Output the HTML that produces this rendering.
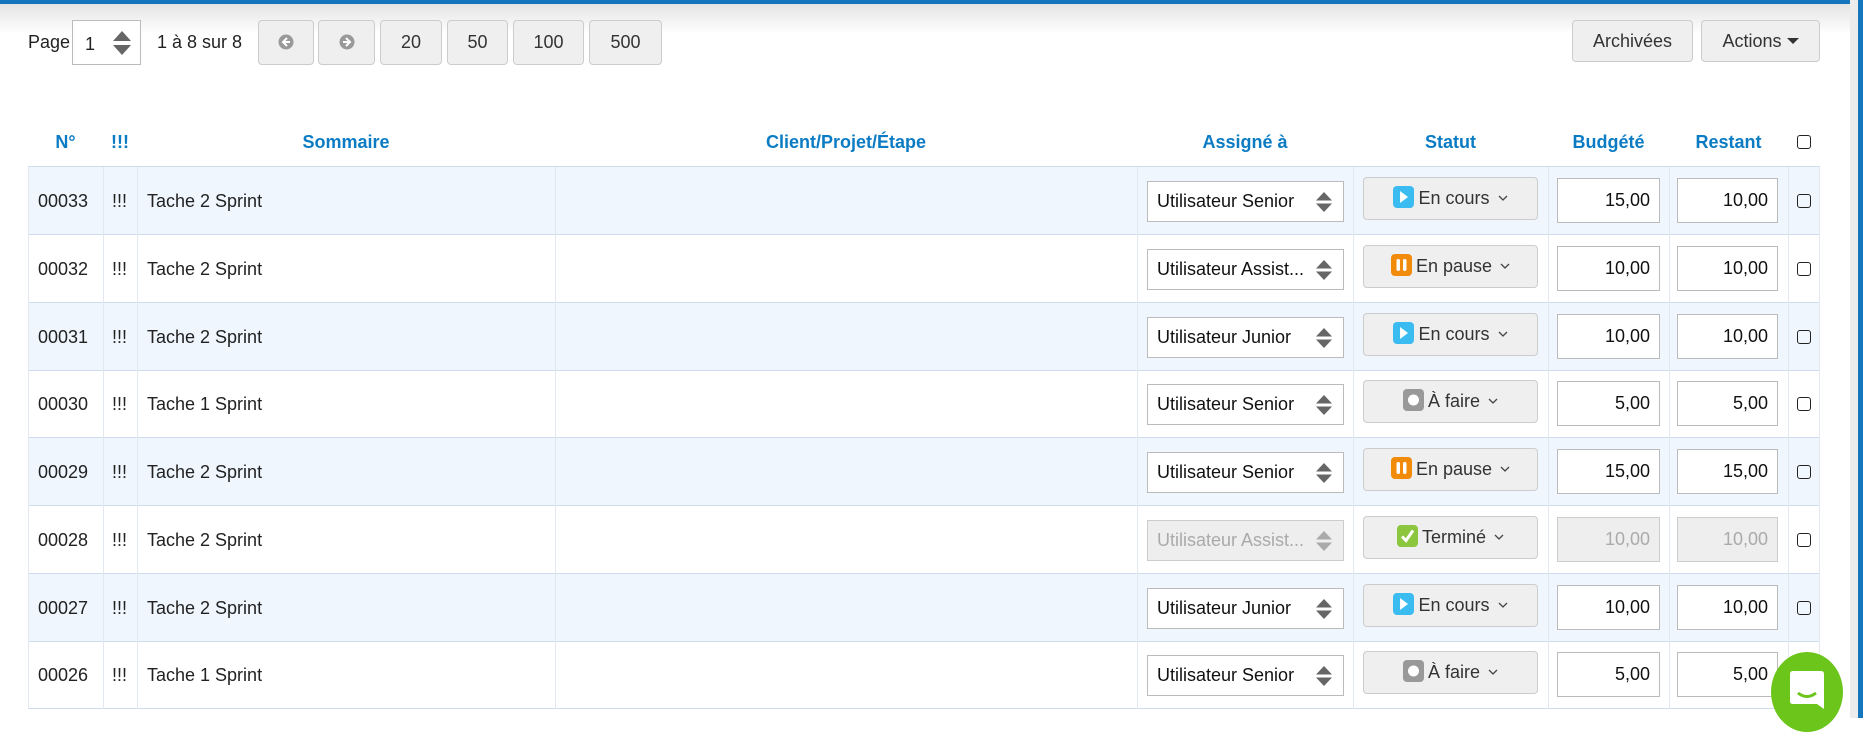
<!DOCTYPE html>
<html><head><meta charset="utf-8"><style>
*{box-sizing:border-box;margin:0;padding:0}
body{width:1863px;height:718px;overflow:hidden;background:#fff;font-family:"Liberation Sans",sans-serif;font-size:18px;color:#222;position:relative}
.topbar{position:absolute;left:0;top:0;width:1863px;height:4px;background:#1477bd}
.shadow{position:absolute;left:0;top:4px;width:1850px;height:30px;background:linear-gradient(#e4e4e4,#fff)}
.rstrip{position:absolute;left:1850px;top:0;width:8px;height:718px;background:#ececec}
.rblue{position:absolute;left:1858px;top:0;width:5px;height:718px;background:#1477bd}
.a{position:absolute}
.btn{position:absolute;top:20px;height:45px;border:1px solid #ccc;border-radius:4px;background:#efefef;text-align:center;line-height:43px;font-size:18px;color:#333}
.hd{position:absolute;top:132px;color:#0b7cc3;font-weight:bold;font-size:18px;text-align:center}
.row{position:absolute;left:28px;width:1792px;height:68px;border-bottom:1px solid #cfdcee}
.row.o{background:#eff6fe}
.vl{position:absolute;top:167px;width:1px;height:542px;background:#e2e8f0}
.c{position:absolute;line-height:68px;font-size:18px}
.sel{position:absolute;left:1119px;top:14px;width:197px;height:41px;border:1px solid #bbb;background:#fff;line-height:39px;padding-left:9px;font-size:18px;color:#111}
.sel.d{background:#eee;color:#aaa;border-color:#ccc}
.arr{position:absolute;right:10px;top:9px;width:18px;height:22px}
.st{position:absolute;left:1335px;top:10px;width:175px;height:43px;border:1px solid #ccc;border-radius:4px;background:#efefef;text-align:center;line-height:41px;font-size:18px;color:#333}
.ic{display:inline-block;width:21px;height:22px;border-radius:4px;vertical-align:-4px;margin-right:4px;position:relative}
.num{position:absolute;top:11px;width:103px;height:45px;border:1px solid #bbb;background:#fff;text-align:right;padding-right:9px;line-height:43px;font-size:18px;color:#111}
.num.d{background:#eee;color:#aaa;border-color:#ccc}
.cb{position:absolute;left:1769px;top:27px;width:14px;height:14px;border:1.5px solid #222;border-radius:3px}
</style></head><body>
<div class="topbar"></div><div class="shadow"></div><div class="rstrip"></div><div class="rblue"></div>

<div class="a" style="left:28px;top:32px;font-size:18px">Page</div>
<div class="a" style="left:72px;top:20px;width:69px;height:45px;border:1px solid #bbb;background:#fff;padding-left:12px;line-height:47px;font-size:18px">1
<svg style="position:absolute;right:8px;top:9px" width="20" height="26" viewBox="0 0 20 26"><path d="M10 1L19 11H1Z M10 25L19 15H1Z" fill="#666"/></svg></div>
<div class="a" style="left:157px;top:32px;font-size:18px">1 à 8 sur 8</div>
<div class="btn" style="left:258px;width:56px"><svg width="16" height="16" viewBox="0 0 16 16" style="vertical-align:-2px"><circle cx="8" cy="8" r="7.5" fill="#999"/><path d="M9 4L5 8L9 12M5 8H12" stroke="#fff" stroke-width="2" fill="none"/></svg></div>
<div class="btn" style="left:318px;width:57px"><svg width="16" height="16" viewBox="0 0 16 16" style="vertical-align:-2px"><circle cx="8" cy="8" r="7.5" fill="#999"/><path d="M7 4L11 8L7 12M11 8H4" stroke="#fff" stroke-width="2" fill="none"/></svg></div>
<div class="btn" style="left:380px;width:62px">20</div>
<div class="btn" style="left:447px;width:61px">50</div>
<div class="btn" style="left:513px;width:71px">100</div>
<div class="btn" style="left:589px;width:73px">500</div>
<div class="btn" style="left:1572px;width:121px;height:42px;line-height:40px">Archivées</div>
<div class="btn" style="left:1701px;width:119px;height:42px;line-height:40px">Actions <span style="display:inline-block;border-left:6px solid transparent;border-right:6px solid transparent;border-top:6px solid #333;vertical-align:3px"></span></div>

<div class="hd" style="left:28px;width:75px">N°</div>
<div class="hd" style="left:103px;width:34px">!!!</div>
<div class="hd" style="left:137px;width:418px">Sommaire</div>
<div class="hd" style="left:555px;width:582px">Client/Projet/Étape</div>
<div class="hd" style="left:1137px;width:216px">Assigné à</div>
<div class="hd" style="left:1353px;width:195px">Statut</div>
<div class="hd" style="left:1548px;width:121px">Budgété</div>
<div class="hd" style="left:1669px;width:119px">Restant</div>
<div class="a" style="left:1797px;top:135px;width:14px;height:14px;border:1.5px solid #222;border-radius:3px"></div>
<div class="a" style="left:28px;top:166px;width:1792px;height:1px;background:#cfdcee"></div>

<div id="rows"></div>
<script>
var R=[["00033","Tache 2 Sprint","Utilisateur Senior","p","En cours","15,00","10,00"],
["00032","Tache 2 Sprint","Utilisateur Assist...","pa","En pause","10,00","10,00"],
["00031","Tache 2 Sprint","Utilisateur Junior","p","En cours","10,00","10,00"],
["00030","Tache 1 Sprint","Utilisateur Senior","t","À faire","5,00","5,00"],
["00029","Tache 2 Sprint","Utilisateur Senior","pa","En pause","15,00","15,00"],
["00028","Tache 2 Sprint","Utilisateur Assist...","d","Terminé","10,00","10,00"],
["00027","Tache 2 Sprint","Utilisateur Junior","p","En cours","10,00","10,00"],
["00026","Tache 1 Sprint","Utilisateur Senior","t","À faire","5,00","5,00"]];
var ic={p:'<span class="ic" style="background:#3bbcf0"><svg width="21" height="22" style="position:absolute;left:0;top:0"><path d="M7 5L15 11L7 17Z" fill="#fff"/></svg></span>',
pa:'<span class="ic" style="background:#f28a0a"><svg width="21" height="22" style="position:absolute;left:0;top:0"><rect x="5.5" y="5" width="3.5" height="12" rx="1.7" fill="#fff"/><rect x="12" y="5" width="3.5" height="12" rx="1.7" fill="#fff"/></svg></span>',
t:'<span class="ic" style="background:#999"><svg width="21" height="22" style="position:absolute;left:0;top:0"><circle cx="10.5" cy="11" r="5.5" fill="#fff"/></svg></span>',
d:'<span class="ic" style="background:#8cc63f"><svg width="21" height="22" style="position:absolute;left:0;top:0"><path d="M5 11.5L9 15.5L16 5.5" stroke="#fff" stroke-width="3" fill="none"/></svg></span>'};
var h='';
R.forEach(function(r,i){var top=167+i*67.75;var dis=r[3]=='d';
h+='<div class="row'+(i%2==0?' o':'')+'" style="top:'+top+'px">'+
'<div class="c" style="left:10px">'+r[0]+'</div><div class="c" style="left:84px">!!!</div><div class="c" style="left:119px">'+r[1]+'</div>'+
'<div class="sel'+(dis?' d':'')+'">'+r[2]+'<svg class="arr" viewBox="0 0 18 22"><path d="M9 1L17 9.5H1Z M9 21L17 12.5H1Z" fill="'+(dis?'#aaa':'#666')+'"/></svg></div>'+
'<div class="st">'+ic[r[3]]+r[4]+' <svg width="10" height="8" style="vertical-align:2px;margin-left:3px"><path d="M1 2L5 6L9 2" stroke="#444" stroke-width="1.3" fill="none"/></svg></div>'+
'<div class="num'+(dis?' d':'')+'" style="left:1529px">'+r[5]+'</div>'+
'<div class="num'+(dis?' d':'')+'" style="left:1649px;width:101px">'+r[6]+'</div>'+
'<div class="cb"></div></div>';});
[28,103,137,555,1137,1353,1548,1669,1788,1819].forEach(function(x){h+='<div class="vl" style="left:'+x+'px"></div>'});
document.getElementById('rows').innerHTML=h;
</script>
<div class="a" style="left:1771px;top:652px;width:72px;height:80px;border-radius:50%;background:#6cc51a"></div>
<svg class="a" style="left:1788px;top:669px" width="38" height="44" viewBox="0 0 38 44"><path d="M5 2H33Q36 2 36 5V40L29 35H5Q2 35 2 32V5Q2 2 5 2Z" fill="#fff"/><path d="M10 24Q19 31 28 24" stroke="#6cc51a" stroke-width="3" fill="none"/></svg>
</body></html>
